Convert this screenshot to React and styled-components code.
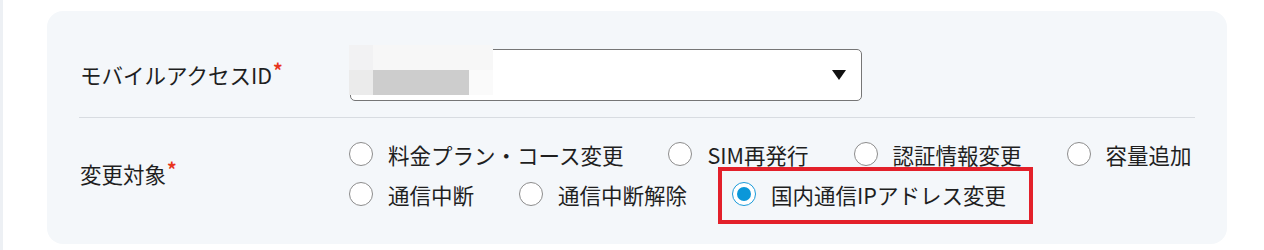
import React from 'react'
import styled, {createGlobalStyle} from 'styled-components'

const Global = createGlobalStyle`
  html, body {
    margin: 0;
    background: #fff;
    font-family: "Noto Sans CJK JP", "Noto Sans", sans-serif;
    color: #1f1f1f;
  }
`;

const options = [
  '料金プラン・コース変更',
  'SIM再発行',
  '認証情報変更',
  '容量追加',
  '通信中断',
  '通信中断解除',
  '国内通信IPアドレス変更',
]

const pixels = [
  ['#f2f2f3', '#f7f7f7', '#f7f7f7', '#f7f7f7', '#f7f7f7', '#f7f7f7'],
  ['#ebebeb', '#cdcdcd', '#cdcdcd', '#cdcdcd', '#cdcdcd', '#fafafa'],
]

export default function App() {
  const selected = '国内通信IPアドレス変更'
  return (
    <Page>
      <Global/>
      <Strip/>
      <Main>
        <Card>
          <Row>
            <Label>モバイルアクセスID<Req>*</Req></Label>
            <Field>
              <Select>
                <Arrow viewBox="0 0 14 10">
                  <polygon points="0,0 14,0 7,10" fill="#111"/>
                </Arrow>
              </Select>
              <Mask>
                {pixels.flat().map((c, i) => (
                  <Pixel key={i} style={{background: c}}/>
                ))}
              </Mask>
            </Field>
          </Row>
          <Row $last>
            <Label>変更対象<Req>*</Req></Label>
            <Radios>
              {options.map(o => (
                <Option key={o} $marked={o === selected}>
                  <Circle $checked={o === selected}/>
                  <span>{o}</span>
                </Option>
              ))}
            </Radios>
          </Row>
        </Card>
      </Main>
    </Page>
  )
}

const Page = styled.div`
    display: flex;
    min-height: 250px;
`;
const Strip = styled.div`
    width: 3px;
    background: #edf0f4;
`;
const Main = styled.div`
    flex: 1;
    padding: 11px 37px 7px 44px;
`;
const Card = styled.div`
    background: #f4f7fa;
    border-radius: 16px;
    padding: 22px 32px 14px;
`;
const Row = styled.div`
    display: flex;
    align-items: center;
    padding: 16px 0;
    border-bottom: ${p => p.$last ? 'none' : '1px solid #d8dce1'};
`;
const Label = styled.div`
    width: 270px;
    flex-shrink: 0;
    font-size: 21.5px;
    line-height: 30px;
    padding-left: 1px;
`;
const Req = styled.span`
    color: #e8341c;
    font-size: 19px;
    font-weight: bold;
    vertical-align: top;
    line-height: 20px;
    margin-left: 1px;
`;
const Field = styled.div`
    position: relative;
`;
const Select = styled.div`
    width: 512px;
    height: 52px;
    box-sizing: border-box;
    border: 1px solid #767676;
    border-radius: 5px;
    background: #fff;
    display: flex;
    align-items: center;
    justify-content: flex-end;
    padding-right: 15px;
`;
const Arrow = styled.svg`
    width: 14px;
    height: 10px;
`;
const Mask = styled.div`
    position: absolute;
    left: -1px;
    top: -4px;
    display: grid;
    grid-template-columns: repeat(6, 24px);
    grid-auto-rows: 25px;
`;
const Pixel = styled.div``;
const Radios = styled.div`
    flex: 1;
    display: flex;
    flex-wrap: wrap;
    column-gap: 45px;
    margin-right: -20px;
    margin-left: -1px;
`;
const Option = styled.label`
    position: relative;
    display: flex;
    align-items: center;
    gap: 15px;
    height: 40px;
    font-size: 21.5px;
    &::after {
        content: '';
        display: ${p => p.$marked ? 'block' : 'none'};
        position: absolute;
        left: -14px;
        right: -27px;
        top: -7px;
        bottom: -10px;
        border: 4px solid #e3202a;
    }
`;
const Circle = styled.span`
    width: 24px;
    height: 24px;
    box-sizing: border-box;
    border-radius: 50%;
    background: #fff;
    border: ${p => p.$checked ? '1.5px solid #1a9ad9' : '1px solid #8c8c8c'};
    display: flex;
    align-items: center;
    justify-content: center;
    &::before {
        content: '';
        display: ${p => p.$checked ? 'block' : 'none'};
        width: 14px;
        height: 14px;
        border-radius: 50%;
        background: #0b97d9;
    }
`;
